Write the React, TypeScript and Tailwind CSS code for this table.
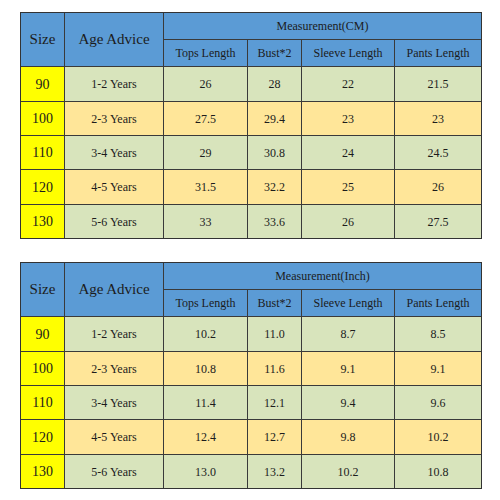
import React from "react";

type Row = { size: string; age: string; vals: string[] };

const cmRows: Row[] = [
  { size: "90", age: "1-2 Years", vals: ["26", "28", "22", "21.5"] },
  { size: "100", age: "2-3 Years", vals: ["27.5", "29.4", "23", "23"] },
  { size: "110", age: "3-4 Years", vals: ["29", "30.8", "24", "24.5"] },
  { size: "120", age: "4-5 Years", vals: ["31.5", "32.2", "25", "26"] },
  { size: "130", age: "5-6 Years", vals: ["33", "33.6", "26", "27.5"] },
];

const inchRows: Row[] = [
  { size: "90", age: "1-2 Years", vals: ["10.2", "11.0", "8.7", "8.5"] },
  { size: "100", age: "2-3 Years", vals: ["10.8", "11.6", "9.1", "9.1"] },
  { size: "110", age: "3-4 Years", vals: ["11.4", "12.1", "9.4", "9.6"] },
  { size: "120", age: "4-5 Years", vals: ["12.4", "12.7", "9.8", "10.2"] },
  { size: "130", age: "5-6 Years", vals: ["13.0", "13.2", "10.2", "10.8"] },
];

const cell =
  "flex items-center justify-center text-[#1c1c1c] font-['Liberation_Serif','Times_New_Roman',serif]";

function SizeTable({ unit, rows }: { unit: string; rows: Row[] }) {
  return (
    <div className="grid w-[462px] gap-px bg-[#3a3a3a] border border-[#333]">
      <div className="grid grid-cols-[43px_98px_1fr] gap-px">
        <div className={`${cell} bg-[#5b9bd5] text-[15px]`}>Size</div>
        <div className={`${cell} bg-[#5b9bd5] text-[15px]`}>Age Advice</div>
        <div className="grid grid-rows-[26px_26px] gap-px">
          <div className={`${cell} bg-[#5b9bd5] text-[12px]`}>Measurement({unit})</div>
          <div className="grid grid-cols-[83px_53px_92px_86px] gap-px">
            <div className={`${cell} bg-[#5b9bd5] text-[12px]`}>Tops Length</div>
            <div className={`${cell} bg-[#5b9bd5] text-[12px]`}>Bust*2</div>
            <div className={`${cell} bg-[#5b9bd5] text-[12px]`}>Sleeve Length</div>
            <div className={`${cell} bg-[#5b9bd5] text-[12px]`}>Pants Length</div>
          </div>
        </div>
      </div>
      {rows.map((r, i) => {
        const bg = i % 2 === 0 ? "bg-[#d8e4bc]" : "bg-[#ffe699]";
        const h = i === 0 || i === 3 ? "h-[34px]" : "h-[33px]";
        return (
          <div
            key={r.size}
            className={`grid grid-cols-[43px_98px_83px_53px_92px_86px] gap-px ${h}`}
          >
            <div className={`${cell} bg-[#ffff00] text-[14px]`}>{r.size}</div>
            <div className={`${cell} ${bg} text-[12px]`}>{r.age}</div>
            {r.vals.map((v, j) => (
              <div key={j} className={`${cell} ${bg} text-[12px]`}>
                {v}
              </div>
            ))}
          </div>
        );
      })}
    </div>
  );
}

export default function App() {
  return (
    <div className="w-[500px] h-[500px] bg-white pt-[12px] pl-[20px] flex flex-col gap-[23px] font-['Liberation_Serif','Times_New_Roman',serif]">
      <SizeTable unit="CM" rows={cmRows} />
      <SizeTable unit="Inch" rows={inchRows} />
    </div>
  );
}
